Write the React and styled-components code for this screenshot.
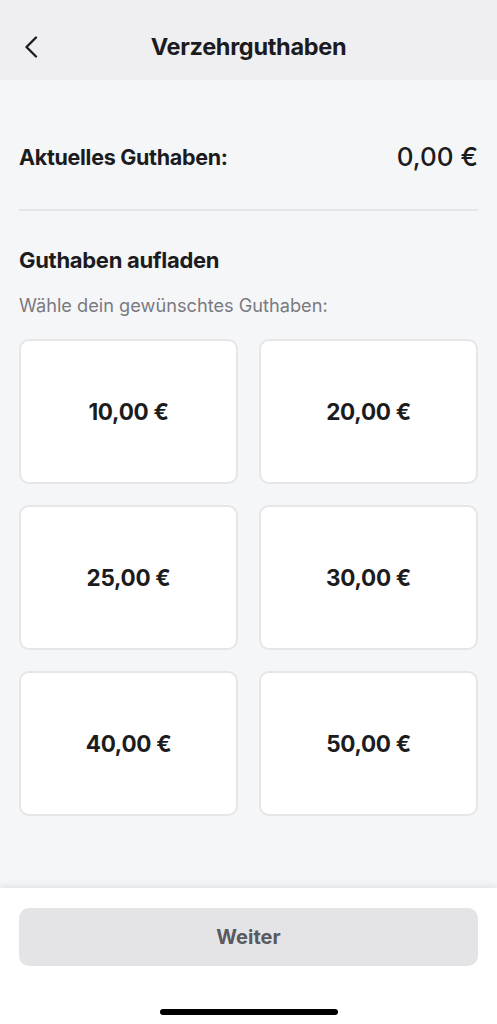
import React from "react";
import styled, { createGlobalStyle } from "styled-components";

const GlobalStyle = createGlobalStyle`
  html, body {
    margin: 0;
    padding: 0;
    background: #f5f6f8;
    font-family: Inter, "Noto Sans", "Liberation Sans", sans-serif;
    -webkit-font-smoothing: antialiased;
  }
  * { box-sizing: border-box; }
`;

const Page = styled.div`
  width: 497px;
  height: 1024px;
  display: flex;
  flex-direction: column;
  background: #f5f6f8;
  overflow: hidden;
`;

const Header = styled.header`
  height: 80px;
  flex-shrink: 0;
  background: #efeff1;
  display: grid;
  grid-template-columns: 60px 1fr 60px;
  align-items: center;
  padding-top: 14px;
`;

const BackButton = styled.button`
  border: none;
  background: none;
  padding: 0 0 0 23px;
  height: 30px;
  display: flex;
  align-items: center;
  cursor: pointer;
`;

const Title = styled.h1`
  margin: 0;
  text-align: center;
  font-size: 23.5px;
  line-height: 28px;
  font-weight: 700;
  color: #1c1c1e;
  letter-spacing: -0.3px;
`;

const Content = styled.main`
  flex: 1;
  padding: 0 19px;
`;

const BalanceRow = styled.div`
  display: flex;
  justify-content: space-between;
  align-items: center;
  height: 131px;
  padding-top: 25px;
  border-bottom: 2px solid #e6e6e9;
`;

const BalanceLabel = styled.span`
  font-size: 21.5px;
  line-height: 26px;
  font-weight: 700;
  color: #1c1c1e;
  letter-spacing: -0.3px;
`;

const BalanceValue = styled.span`
  font-size: 26px;
  line-height: 30px;
  font-weight: 500;
  color: #1c1c1e;
`;

const SectionTitle = styled.h2`
  margin: 36px 0 0;
  font-size: 22px;
  line-height: 26px;
  font-weight: 700;
  color: #1c1c1e;
  letter-spacing: -0.3px;
`;

const Hint = styled.p`
  margin: 21px 0 0;
  font-size: 18.2px;
  line-height: 22px;
  color: #7a7a80;
  font-weight: 400;
`;

const AmountGrid = styled.div`
  margin-top: 23px;
  display: grid;
  grid-template-columns: 1fr 1fr;
  column-gap: 21px;
  row-gap: 21px;
`;

const AmountCard = styled.button`
  height: 145px;
  background: #ffffff;
  border: 2px solid #e6e6e9;
  border-radius: 10px;
  font-family: inherit;
  font-size: 22.5px;
  font-weight: 700;
  color: #1c1c1e;
  cursor: pointer;
  letter-spacing: -0.3px;
`;

const Footer = styled.footer`
  height: 136px;
  flex-shrink: 0;
  background: #ffffff;
  box-shadow: 0 -3px 6px rgba(0, 0, 0, 0.07);
  display: flex;
  flex-direction: column;
  align-items: center;
  padding: 20px 19px 0;
`;

const NextButton = styled.button`
  width: 100%;
  height: 58px;
  border: none;
  border-radius: 10px;
  background: #e4e4e7;
  font-family: inherit;
  font-size: 20px;
  font-weight: 700;
  color: #59595e;
`;

const HomeIndicator = styled.div`
  margin-top: 43px;
  width: 178px;
  height: 6px;
  border-radius: 3px;
  background: #000;
`;

const amounts = ["10,00 €", "20,00 €", "25,00 €", "30,00 €", "40,00 €", "50,00 €"];

export default function App() {
  return (
    <>
      <GlobalStyle />
      <Page>
        <Header>
          <BackButton aria-label="Zurück">
            <svg width="15" height="22" viewBox="0 0 15 22" fill="none">
              <path d="M13 1.5L3.5 11l9.5 9.5" stroke="#1c1c1e" strokeWidth="2.3" strokeLinecap="round" strokeLinejoin="round" />
            </svg>
          </BackButton>
          <Title>Verzehrguthaben</Title>
          <span />
        </Header>
        <Content>
          <BalanceRow>
            <BalanceLabel>Aktuelles Guthaben:</BalanceLabel>
            <BalanceValue>0,00 €</BalanceValue>
          </BalanceRow>
          <SectionTitle>Guthaben aufladen</SectionTitle>
          <Hint>Wähle dein gewünschtes Guthaben:</Hint>
          <AmountGrid>
            {amounts.map((a) => (
              <AmountCard key={a}>{a}</AmountCard>
            ))}
          </AmountGrid>
        </Content>
        <Footer>
          <NextButton>Weiter</NextButton>
          <HomeIndicator />
        </Footer>
      </Page>
    </>
  );
}
